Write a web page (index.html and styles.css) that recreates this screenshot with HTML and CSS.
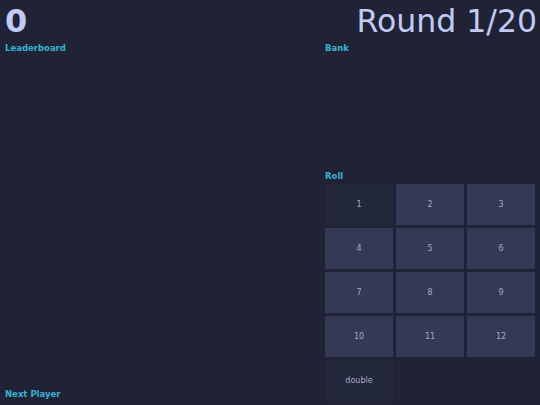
FILE: index.html
```html
<!DOCTYPE html>
<html>
<head>
<meta charset="utf-8">
<link rel="stylesheet" href="styles.css">
</head>
<body>
<div class="app">
  <header class="top">
    <div class="score">0</div>
    <div class="round">Round 1/20</div>
  </header>
  <div class="cols">
    <section class="left">
      <div class="label">Leaderboard</div>
      <div class="fill"></div>
      <div class="label next">Next Player</div>
    </section>
    <section class="right">
      <div class="label">Bank</div>
      <div class="fill"></div>
      <div class="label roll-label">Roll</div>
      <div class="grid">
        <button class="tile dim">1</button>
        <button class="tile">2</button>
        <button class="tile">3</button>
        <button class="tile">4</button>
        <button class="tile">5</button>
        <button class="tile">6</button>
        <button class="tile">7</button>
        <button class="tile">8</button>
        <button class="tile">9</button>
        <button class="tile">10</button>
        <button class="tile">11</button>
        <button class="tile">12</button>
        <button class="tile dim">double</button>
      </div>
    </section>
  </div>
</div>
</body>
</html>
```
FILE: styles.css
```css
html, body {
  margin: 0;
  padding: 0;
  background: #1f2335;
  font-family: "DejaVu Sans", sans-serif;
}
.app {
  box-sizing: border-box;
  height: 405px;
  padding: 5px 5px 4px;
  display: flex;
  flex-direction: column;
}
.top {
  display: flex;
  justify-content: space-between;
  align-items: flex-start;
  line-height: 1;
  color: #c0caf5;
  height: 32px;
}
.score {
  font-size: 32px;
  font-weight: bold;
}
.round {
  font-size: 31.5px;
  font-weight: normal;
  margin-right: -2px;
  margin-top: 0.5px;
}
.cols {
  flex: 1;
  display: grid;
  grid-template-columns: 1fr 210px;
  column-gap: 5px;
  margin-top: 6px;
}
.left, .right {
  display: flex;
  flex-direction: column;
}
.fill {
  flex: 1;
}
.label {
  font-size: 8.5px;
  font-weight: bold;
  color: #38b2d2;
  line-height: 10px;
}
.next {
  margin-bottom: 2px;
}
.roll-label {
  margin-bottom: 3px;
}
.grid {
  display: grid;
  grid-template-columns: repeat(3, 68px);
  grid-auto-rows: 41px;
  gap: 3px;
}
.tile {
  border: none;
  margin: 0;
  padding: 0;
  background: #343a55;
  color: #a4abcb;
  font-family: "DejaVu Sans", sans-serif;
  font-size: 8px;
}
.tile.dim {
  background: #24283b;
}
```
